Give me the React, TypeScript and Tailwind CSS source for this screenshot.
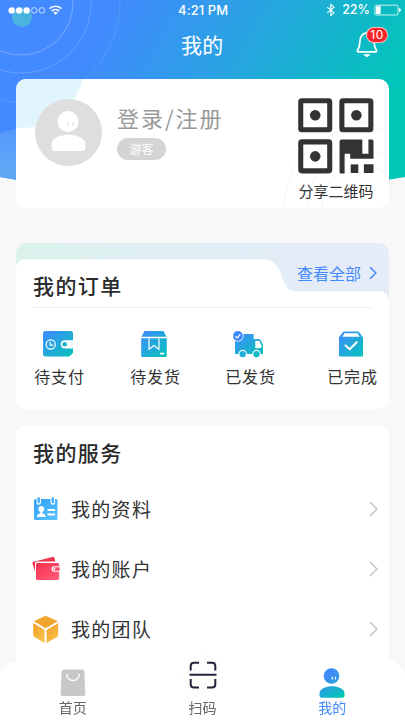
import React from 'react';

const orders = [
  { id: 'pay', label: '待支付', icon: WalletIcon },
  { id: 'pack', label: '待发货', icon: ParcelIcon },
  { id: 'sent', label: '已发货', icon: TruckIcon },
  { id: 'done', label: '已完成', icon: DoneIcon },
];

const services = [
  { id: 'profile', label: '我的资料', icon: ProfileIcon },
  { id: 'account', label: '我的账户', icon: AccountIcon },
  { id: 'team', label: '我的团队', icon: TeamIcon },
];

function HeaderBackdrop() {
  return (
    <svg className="absolute inset-0" width="405" height="200" viewBox="0 0 405 200">
      <defs>
        <linearGradient id="sky" gradientUnits="userSpaceOnUse" x1="96" y1="24" x2="352" y2="168">
          <stop offset="0" stopColor="#4389ff" />
          <stop offset="0.5" stopColor="#26a6df" />
          <stop offset="1" stopColor="#00c6b7" />
        </linearGradient>
        <linearGradient id="wave" x1="0" y1="0" x2="0" y2="1">
          <stop offset="0" stopColor="#5598fa" />
          <stop offset="0.6" stopColor="#60a7f6" />
        </linearGradient>
        <clipPath id="skyClip">
          <path d="M0 0H405V177Q202 214 0 177Z" />
        </clipPath>
      </defs>
      <g clipPath="url(#skyClip)">
        <rect width="405" height="200" fill="url(#sky)" />
        <path d="M0 134Q10 129 30 127V200H0Z" fill="url(#wave)" />
        <g fill="none" stroke="#fff">
          <circle cx="21" cy="3" r="52" strokeOpacity="0.28" />
          <circle cx="21" cy="3" r="70" strokeOpacity="0.2" />
          <circle cx="21" cy="3" r="99" strokeOpacity="0.12" />
        </g>
        <circle cx="22" cy="17" r="10" fill="#4ab3de" />
      </g>
    </svg>
  );
}

function StatusBar() {
  return (
    <div className="relative flex h-5 items-center px-2 font-['Inter','Liberation_Sans',sans-serif] text-white">
      <div className="flex w-[170px] items-center">
        <svg width="56" height="12" viewBox="8 3 56 12" fill="#fff">
          <circle cx="11.7" cy="9.4" r="3.2" />
          <circle cx="19.2" cy="9.4" r="3.2" />
          <circle cx="26.7" cy="9.4" r="3.2" />
          <circle cx="34.3" cy="9.4" r="2.8" fill="none" stroke="#fff" strokeWidth="0.7" />
          <circle cx="41.9" cy="9.4" r="2.8" fill="none" stroke="#fff" strokeWidth="0.7" />
          <path d="M49.6 7.6a8.6 8.6 0 0 1 11.8 0M51.9 10a5.4 5.4 0 0 1 7.2 0" fill="none" stroke="#fff" strokeWidth="1.7" />
          <path d="M53.3 11.6a3.4 3.4 0 0 1 4.4 0L55.5 14Z" />
        </svg>
      </div>
      <span className="text-[13px] leading-5 font-medium tracking-[0.1px]">4:21 PM</span>
      <div className="ml-auto flex items-center">
        <svg width="10" height="14" viewBox="0 0 10 14" fill="none" stroke="#fff" strokeWidth="1.1">
          <path d="M1.3 4.2L8 9.8 4.8 12.6V1.4L8 4.2 1.3 9.8" />
        </svg>
        <span className="ml-[6px] text-[12.5px] leading-5 font-medium">22%</span>
        <svg className="ml-1 -mr-[5px]" width="28" height="12" viewBox="0 0 28 12">
          <rect x="1" y="1.2" width="23" height="9.8" rx="1.2" fill="none" stroke="#fff" strokeWidth="0.8" />
          <rect x="2" y="2.2" width="4.6" height="7.8" fill="#fff" />
          <path d="M25 4v4q2-.5 2-2t-2-2Z" fill="#fff" />
        </svg>
      </div>
    </div>
  );
}

function Bell() {
  return (
    <div className="relative ml-auto h-[30px] w-[34px]">
      <svg width="24" height="30" viewBox="355 29 24 30" fill="none" stroke="#fff" strokeWidth="1.7" strokeLinecap="round" strokeLinejoin="round">
        <path d="M367 32.600C361.500 33.500 359.800 38 359.800 42.500 359.800 47 358.800 48.500 357.700 50 357 51.300 357.500 51.900 358.500 51.900H375.500C376.500 51.900 377 51.300 376.300 50 375.200 48.500 374.200 47 374.200 42.500" />
        <path d="M364.400 54.800h5.200q-2.600 3.600-5.200 0Z" fill="#fff" strokeWidth="1" />
      </svg>
      <span className="absolute -top-[2px] left-[11px] flex h-4 w-[22px] items-center justify-center rounded-full border border-white/70 bg-[#fa2428] font-['Inter','Liberation_Sans',sans-serif] text-[12px] leading-none tracking-[0.4px] text-white">
        10
      </span>
    </div>
  );
}

function QrIcon() {
  return (
    <svg width="76" height="76" viewBox="0 0 75 75">
      <g fill="none" stroke="#333" strokeWidth="5">
        <rect x="2.7" y="2.7" width="28.6" height="28.6" rx="1" />
        <rect x="43.3" y="2.7" width="28.6" height="28.6" rx="1" />
        <rect x="2.7" y="43.3" width="28.6" height="28.6" rx="1" />
      </g>
      <g fill="#333">
        <circle cx="17" cy="17" r="5.2" />
        <circle cx="57.6" cy="17" r="5.2" />
        <circle cx="17" cy="57.6" r="5.2" />
        <path d="M43 41H63.5V55H69.5V41H73Q74.5 41 74.5 42.5V60H51.5V55H46V74.5H42.5Q41 74.5 41 73V43Q41 41 43 41Z" />
        <rect x="52" y="65.5" width="7.5" height="8.5" />
        <path d="M65 65.5H74.5V74H65Z" />
      </g>
    </svg>
  );
}

function UserCard() {
  return (
    <section className="relative mx-4 mt-[11px] flex h-[129px] overflow-hidden rounded-[10px] bg-white">
      <svg className="absolute inset-0" width="373" height="129" viewBox="16 79 373 129" fill="none">
        <circle cx="22" cy="66" r="62" fill="#e3f5fc" />
        <g stroke="#ecf7fa">
          <circle cx="364" cy="208" r="80" />
          <circle cx="364" cy="208" r="57" />
          <circle cx="364" cy="208" r="42" />
        </g>
      </svg>
      <svg className="relative mt-5 ml-[19px]" width="67" height="67" viewBox="35 99 67 67">
        <circle cx="68.5" cy="132.5" r="33.5" fill="#dedede" />
        <circle cx="68" cy="121.5" r="10.5" fill="#fff" />
        <path d="M68.5 134.8c7 0 12.5 2.2 15.5 5.5 1.3 1.5 1.3 3 1.3 4.5v3q0 3.3-3.3 3.3H55q-3.3 0-3.3-3.3v-3c0-1.5 0-3 1.3-4.5 3-3.3 8.500-5.5 15.5-5.5Z" fill="#fff" />
        <path d="M68.300 122.5v3.5M73.200 122.5v3.5" stroke="#dedede" strokeWidth="1.3" />
      </svg>
      <div className="relative ml-[15px] flex flex-col items-start pt-[24px]">
        <h2 className="text-[22px] leading-[28px] tracking-[2px] whitespace-nowrap text-[#999]">登录/注册</h2>
        <span className="mt-[7px] flex h-[22px] w-[49px] items-center justify-center rounded-full bg-[#d4d4d4] text-[12px] leading-none text-white">游客</span>
      </div>
      <div className="relative mt-[19px] mr-[15px] ml-auto flex w-[76px] flex-col items-center">
        <QrIcon />
        <span className="mt-[7px] text-[15px] leading-[20px] whitespace-nowrap text-[#333]">分享二维码</span>
      </div>
    </section>
  );
}

function BlueTeal({ id }: { id: string }) {
  return (
    <defs>
      <linearGradient id={id} x1="0" y1="0" x2="1" y2="1">
        <stop offset="0" stopColor="#3f8bff" />
        <stop offset="1" stopColor="#06c4b9" />
      </linearGradient>
    </defs>
  );
}

function WalletIcon() {
  return (
    <svg className="mr-[3px]" width="32" height="28" viewBox="0 0 32 28">
      <BlueTeal id="wallet" />
      <path d="M3.5 1H28.5Q31 1 31 3.5V23L27.5 26.500H3.5Q1 26.5 1 24V3.5Q1 1 3.5 1Z" fill="url(#wallet)" />
      <circle cx="8.7" cy="14.5" r="4.6" fill="none" stroke="#fff" strokeWidth="1.2" />
      <path d="M8.2 11.8v3.3h3" fill="none" stroke="#fff" strokeWidth="1.2" />
      <path d="M31 10.2H23q-4.300 0-4.300 4.100T23 18.5H31Z" fill="#fff" />
      <circle cx="22.700" cy="14.3" r="2.3" fill="#15b5cc" />
      <path d="M30 10.5v8" stroke="#bfeceb" strokeWidth="0.8" />
    </svg>
  );
}

function ParcelIcon() {
  return (
    <svg className="mr-[4px]" width="28" height="28" viewBox="0 0 28 28">
      <BlueTeal id="parcel" />
      <path d="M4.5 1H23.5L26.5 6.7H1.5ZM1.2 8.3H26.8V26Q26.8 27 25.8 27H2.2Q1.2 27 1.2 26Z" fill="url(#parcel)" />
      <path d="M9 8.3V19.2L13.9 15.5 19 19.200V8.3" fill="none" stroke="#fff" strokeWidth="1.2" />
      <rect x="19.8" y="22.8" width="4.5" height="1.6" rx="0.8" fill="#fff" />
    </svg>
  );
}

function TruckIcon() {
  return (
    <svg className="mr-[5px]" width="32" height="28" viewBox="0 0 32 28">
      <BlueTeal id="truck" />
      <path d="M3 4H21.6V9H26.5Q27.8 9 28.5 10L30.5 13.5Q31 14.3 31 15.5V24H3Z" fill="url(#truck)" />
      <path d="M23.3 10.8h3.2q.8 0 1.2.8l2 4.400v1.3l-2.400 1h-4Z" fill="#fff" />
      <circle cx="10.7" cy="24" r="4.2" fill="#fff" />
      <circle cx="24.5" cy="24" r="4.2" fill="#fff" />
      <circle cx="10.7" cy="24.1" r="3.2" fill="#1eacd8" />
      <circle cx="24.5" cy="24.1" r="3.2" fill="#12bac8" />
      <circle cx="5.9" cy="6" r="5.7" fill="#fff" />
      <circle cx="5.9" cy="6" r="4.9" fill="#3f8af8" />
      <path d="M3.5 6.2l1.8 1.7 3-3.6" fill="none" stroke="#fff" strokeWidth="1.2" />
    </svg>
  );
}

function DoneIcon() {
  return (
    <svg className="mr-[3px]" width="26" height="28" viewBox="0 0 26 28">
      <BlueTeal id="done" />
      <path d="M5.5 1.5H20.5L25 7.2V25.5Q25 26.5 24 26.5H2Q1 26.5 1 25.5V7.2Z" fill="url(#done)" />
      <path d="M6.5 3.2H19.5L21.7 6.8H4.3Z" fill="#fff" />
      <path d="M7.5 15.5l4.2 3.8 7-7" fill="none" stroke="#fff" strokeWidth="2" strokeLinecap="round" strokeLinejoin="round" />
    </svg>
  );
}

function ProfileIcon() {
  return (
    <svg width="28" height="28" viewBox="32 495 28 28">
      <defs>
        <linearGradient id="profile" x1="0" y1="0" x2="1" y2="1">
          <stop offset="0" stopColor="#2f9ef6" />
          <stop offset="1" stopColor="#5cc5ff" />
        </linearGradient>
      </defs>
      <path d="M35.5 499H56Q57.5 499 57.5 500.5V519Q57.5 520 56 520H35.5Q34 520 34 519V500.5Q34 499 35.5 499Z" fill="url(#profile)" />
      <path d="M38.7 499V502.5M52.8 499V502.5" fill="none" stroke="#fff" strokeWidth="4.6" strokeLinecap="round" />
      <path d="M38.7 498.5V502M52.8 498.5V502" fill="none" stroke="#45b2fa" strokeWidth="2.6" strokeLinecap="round" />
      <circle cx="41.3" cy="509" r="2.9" fill="#fff" />
      <path d="M37 517q0-3 2.8-3.5 1-.5.5-2h2q-.5 1.5.5 2 2.8.5 2.8 3.5Z" fill="#fff" />
      <path d="M47.5 510h7.500M47.5 514.5h7.500" stroke="#fff" strokeWidth="1.8" />
    </svg>
  );
}

function AccountIcon() {
  return (
    <svg width="28" height="28" viewBox="32 555 28 28">
      <defs>
        <linearGradient id="account" x1="0" y1="0" x2="1" y2="1">
          <stop offset="0" stopColor="#f8304f" />
          <stop offset="1" stopColor="#ff5f7c" />
        </linearGradient>
      </defs>
      <path d="M32.5 563.500Q32 562 33.5 561.7L52.5 557Q54 556.6 54.500 558L55.3 561.4H37Q35 561.4 35 563.5V571.5Z" fill="#f2314d" />
      <path d="M37.5 563H57.5Q59.2 563 59.2 564.5V578.5Q59.2 580 57.5 580H37.5Q36 580 36 578.5V564.5Q36 563 37.5 563Z" fill="url(#account)" />
      <path d="M59.5 566.3H54.3Q51.5 566.3 51.5 569.1 51.5 571.8 54.3 571.8H59.5V570.6H54.5V567.5H59.5Z" fill="#fff" />
      <path d="M54 567.5H59.5V570.6H54Q52.8 570.6 52.8 569.1 52.8 567.5 54 567.5Z" fill="#fd4c69" />
      <circle cx="54.4" cy="569.1" r="1" fill="#fff" />
    </svg>
  );
}

function TeamIcon() {
  return (
    <svg width="28" height="30" viewBox="32 614 28 30">
      <defs>
        <linearGradient id="team" x1="0" y1="0" x2="0.6" y2="1">
          <stop offset="0" stopColor="#ee9f26" />
          <stop offset="1" stopColor="#fbc04a" />
        </linearGradient>
      </defs>
      <path d="M45.6 616L57.3 621.3 45.6 628 34.3 621.3Z" fill="#efa42b" stroke="#efa42b" strokeWidth="0.5" strokeLinejoin="round" />
      <path d="M33.200 623L44.6 630V643L34.5 637Q33.2 636.3 33.2 635Z" fill="url(#team)" />
      <path d="M58.2 623L46.6 630V643L57 637Q58.2 636.300 58.2 635Z" fill="url(#team)" />
    </svg>
  );
}

function OrdersCard() {
  return (
    <section className="relative mx-4 mt-[35px] h-[166px] overflow-hidden rounded-[10px] bg-white">
      <svg className="absolute inset-0" width="373" height="60" viewBox="16 243 373 60">
        <defs>
          <linearGradient id="orderTop" x1="0" y1="0" x2="1" y2="0">
            <stop offset="0" stopColor="#dcf2ec" />
            <stop offset="0.5" stopColor="#e0eef5" />
            <stop offset="1" stopColor="#e6ebf8" />
          </linearGradient>
        </defs>
        <path d="M16 243H389V301Q388 291.3 379 291.3H296Q288 291.3 284.5 283L280.5 272.5Q275 259.2 262 259.2H26Q16 259.2 16 269Z" fill="url(#orderTop)" />
      </svg>
      <div className="relative mx-4 flex h-[65px] justify-between border-b border-[#f0f0f0]">
        <h2 className="pt-[28px] pl-px text-[21px] leading-7 font-medium tracking-[1.4px] text-[#2b2b2b]">我的订单</h2>
        <button className="-mr-1 flex h-[60px] items-center gap-[8px] text-[16px] text-[#4389fb]">
          查看全部
          <svg width="8" height="14" viewBox="0 0 8 14" fill="none" stroke="#4389fb" strokeWidth="1.5">
            <path d="M1 1.2L6.8 7 1 12.8" />
          </svg>
        </button>
      </div>
      <div className="relative ml-[18px] grid grid-cols-[96px_95px_102px_51px] pt-[22px]">
        {orders.map(({ id, label, icon: Icon }) => (
          <div key={id} className="flex w-[51px] flex-col items-center">
            <Icon />
            <span className="mt-[6px] text-[16px] leading-6 tracking-[0.8px] whitespace-nowrap text-[#333]">{label}</span>
          </div>
        ))}
      </div>
    </section>
  );
}

function ServicesCard() {
  return (
    <section className="mx-4 mt-4 flex-1 rounded-t-[10px] bg-white px-4 pt-[13px]">
      <h2 className="pl-px text-[21px] leading-7 font-medium tracking-[1.4px] text-[#2b2b2b]">我的服务</h2>
      <div className="mt-[13px]">
        {services.map(({ id, label, icon: Icon }) => (
          <div key={id} className="flex h-[60px] items-center">
            <Icon />
            <span className="ml-[11px] text-[19px] leading-7 tracking-[1.3px] text-[#333]">{label}</span>
            <svg className="-mr-[5px] ml-auto" width="9" height="16" viewBox="0 0 9 16" fill="none" stroke="#c4c4c4" strokeWidth="1.5">
              <path d="M1 1L8 8 1 15" />
            </svg>
          </div>
        ))}
      </div>
    </section>
  );
}

function TabBar() {
  return (
    <nav className="fixed bottom-0 left-0 flex h-[59px] w-[405px] rounded-t-[16px] bg-white px-2 text-[14px] leading-4 text-[#666]">
      <div className="flex flex-1 flex-col items-center pt-[8px]">
        <svg width="26" height="28" viewBox="0 0 26 28">
          <path d="M4 0.5H22Q24 0.5 24.3 2.5L25.4 24.5Q25.5 27 23 27H3Q0.5 27 0.6 24.5L1.7 2.5Q2 0.5 4 0.5Z" fill="#c8c8c8" />
          <path d="M6.8 5.5c.5 3.5 3 6 6.200 6s5.700-2.5 6.200-6" fill="none" stroke="#fff" strokeWidth="1.5" strokeLinecap="round" />
        </svg>
        <span className="mt-[2px]">首页</span>
      </div>
      <div className="flex flex-1 flex-col items-center">
        <svg className="-mt-[7px]" width="42" height="42" viewBox="0 0 42 42">
          <circle cx="21" cy="21" r="20" fill="#fdfdfb" />
          <path d="M8.7 16.5V12Q8.7 8.7 12 8.7H17M25 8.7H30Q33.3 8.7 33.3 12V16.5M8.7 25V30.3Q8.7 33.6 12 33.6H17M25 33.6H30Q33.3 33.6 33.3 30.3V25M7.5 20.8H34.5" fill="none" stroke="#28233c" strokeWidth="2" />
        </svg>
        <span className="mt-[3px]">扫码</span>
      </div>
      <div className="flex flex-1 flex-col items-center pt-[7px] text-[#4389fb]">
        <svg width="26" height="30" viewBox="0 0 26 30">
          <defs>
            <linearGradient id="me" gradientUnits="userSpaceOnUse" x1="6" y1="2" x2="22" y2="30">
              <stop offset="0.2" stopColor="#3f8bf8" />
              <stop offset="1" stopColor="#00c8b4" />
            </linearGradient>
          </defs>
          <circle cx="12.5" cy="8" r="7.8" fill="url(#me)" />
          <path d="M13 18.2c5.3 0 9.5 1.700 11.5 4.2 1 1.3 1 2.5 1 3.6v1.5q0 2.3-2.3 2.3H2.8Q.5 29.8.5 27.5V26c0-1.1 0-2.3 1-3.6 2-2.5 6.2-4.2 11.5-4.2Z" fill="url(#me)" />
          <path d="M13.3 8.700v2.8M16.5 8.700v2.8" stroke="#fff" strokeWidth="1.2" />
        </svg>
        <span className="mt-[1px]">我的</span>
      </div>
    </nav>
  );
}

const App: React.FC = () => {
  return (
    <main className="relative flex h-[720px] w-[405px] flex-col overflow-hidden bg-[#f8f8f8] font-['Noto_Sans_CJK_SC',sans-serif]">
      <HeaderBackdrop />
      <StatusBar />
      <header className="relative flex h-12 items-center pr-4 pl-[181px]">
        <h1 className="text-[21px] leading-8 font-normal tracking-[0.3px] text-white">我的</h1>
        <Bell />
      </header>
      <UserCard />
      <OrdersCard />
      <ServicesCard />
      <TabBar />
    </main>
  );
};

export default App;
